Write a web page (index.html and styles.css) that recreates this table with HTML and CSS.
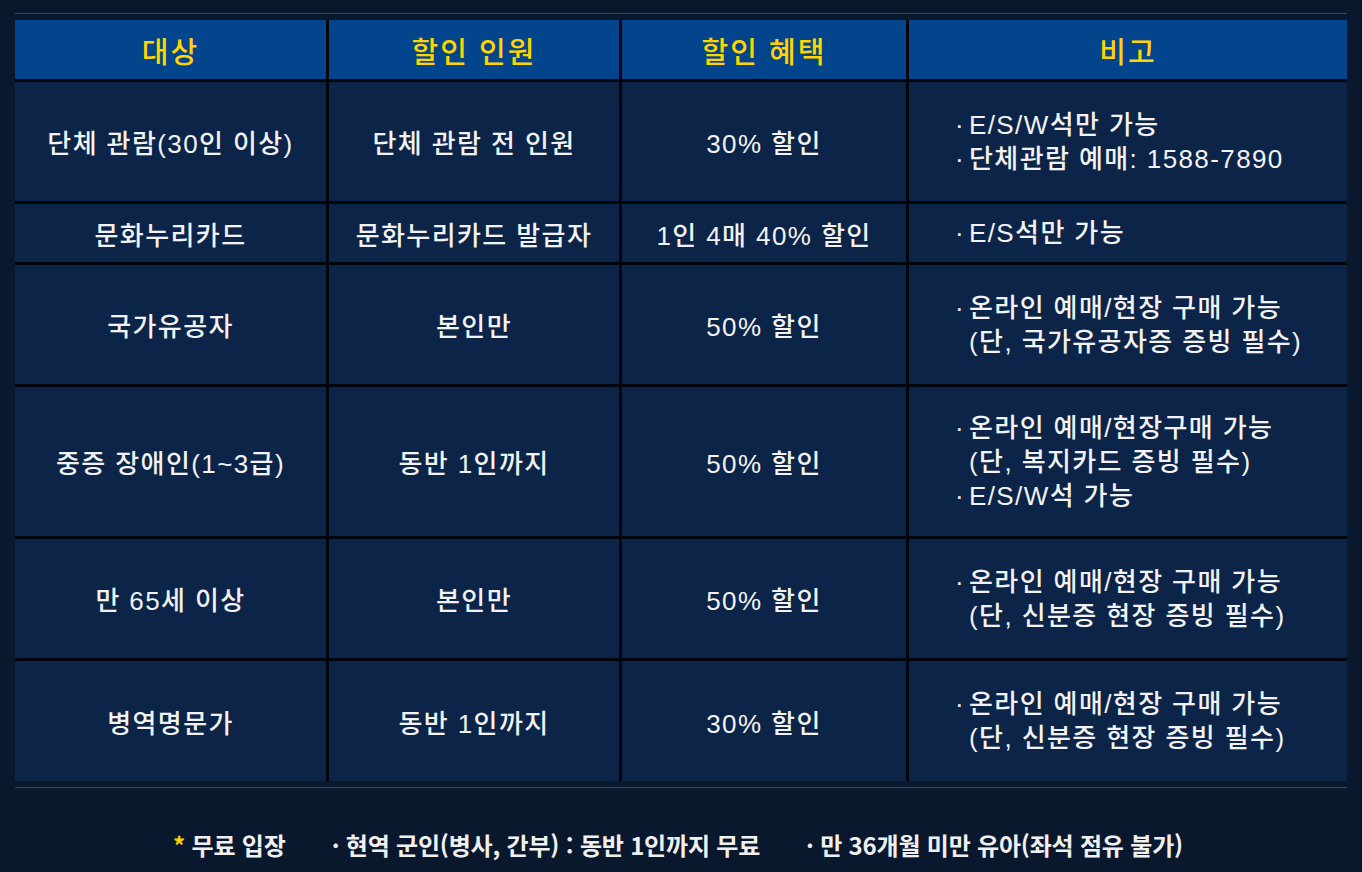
FILE: index.html
```html
<!DOCTYPE html>
<html lang="ko">
<head>
<meta charset="utf-8">
<title>할인 안내</title>
<link rel="stylesheet" href="styles.css">
</head>
<body>
<div class="wrap">
  <div class="rule"></div>
  <div class="table">
    <div class="th">대상</div>
    <div class="th">할인 인원</div>
    <div class="th">할인 혜택</div>
    <div class="th">비고</div>

    <div class="td h119">단체 관람(30인 이상)</div>
    <div class="td">단체 관람 전 인원</div>
    <div class="td">30% 할인</div>
    <div class="td note">
      <div class="li"><span class="b">·</span><span>E/S/W석만 가능</span></div>
      <div class="li"><span class="b">·</span><span>단체관람 예매: 1588-7890</span></div>
    </div>

    <div class="td h58">문화누리카드</div>
    <div class="td">문화누리카드 발급자</div>
    <div class="td">1인 4매 40% 할인</div>
    <div class="td note">
      <div class="li"><span class="b">·</span><span>E/S석만 가능</span></div>
    </div>

    <div class="td h119">국가유공자</div>
    <div class="td">본인만</div>
    <div class="td">50% 할인</div>
    <div class="td note">
      <div class="li"><span class="b">·</span><span>온라인 예매/현장 구매 가능<br>(단, 국가유공자증 증빙 필수)</span></div>
    </div>

    <div class="td h149">중증 장애인(1~3급)</div>
    <div class="td">동반 1인까지</div>
    <div class="td">50% 할인</div>
    <div class="td note">
      <div class="li"><span class="b">·</span><span>온라인 예매/현장구매 가능<br>(단, 복지카드 증빙 필수)</span></div>
      <div class="li"><span class="b">·</span><span>E/S/W석 가능</span></div>
    </div>

    <div class="td h119">만 65세 이상</div>
    <div class="td">본인만</div>
    <div class="td">50% 할인</div>
    <div class="td note">
      <div class="li"><span class="b">·</span><span>온라인 예매/현장 구매 가능<br>(단, 신분증 현장 증빙 필수)</span></div>
    </div>

    <div class="td h120">병역명문가</div>
    <div class="td">동반 1인까지</div>
    <div class="td">30% 할인</div>
    <div class="td note">
      <div class="li"><span class="b">·</span><span>온라인 예매/현장 구매 가능<br>(단, 신분증 현장 증빙 필수)</span></div>
    </div>
  </div>
  <div class="rule bottom"></div>
  <div class="footer">
    <span class="fi"><span class="star">*</span> 무료 입장</span>
    <span class="fi">· 현역 군인(병사, 간부) : 동반 1인까지 무료</span>
    <span class="fi">· 만 36개월 미만 유아(좌석 점유 불가)</span>
  </div>
</div>
</body>
</html>
```

FILE: styles.css
```css
html, body {
  margin: 0;
  padding: 0;
}
body {
  background: #0a182d;
  font-family: "Liberation Sans", "Noto Sans CJK KR", sans-serif;
  color: #f2f2f2;
  width: 1362px;
  height: 872px;
  overflow: hidden;
}
.wrap {
  padding: 13px 15px 0 15px;
  width: 1332px;
}
.rule {
  height: 1px;
  background: #1b4e8e;
}
.table {
  margin-top: 6px;
  display: grid;
  grid-template-columns: 311px 290px 284px 438px;
  gap: 3px;
  background: #02060c;
}
.th {
  height: 59px;
  background: #03458d;
  color: #ffd400;
  font-size: 29px;
  font-weight: 500;
  letter-spacing: 2px;
  display: flex;
  align-items: center;
  justify-content: center;
}
.td {
  background: #0c2447;
  font-size: 26px;
  font-weight: 500;
  letter-spacing: 1.4px;
  display: flex;
  align-items: center;
  justify-content: center;
}
.h119 { height: 119px; }
.h58 { height: 58px; }
.h149 { height: 149px; }
.h120 { height: 120px; }
.note {
  flex-direction: column;
  align-items: flex-start;
  justify-content: center;
  padding-left: 46px;
  line-height: 34px;
}
.li {
  display: flex;
}
.li .b {
  width: 14px;
  flex: none;
}
.rule.bottom {
  margin-top: 6px;
}
.footer {
  margin-top: 39px;
  display: flex;
  justify-content: center;
  gap: 46px;
  font-family: "Noto Sans CJK KR", sans-serif;
  font-size: 24px;
  font-weight: 700;
  letter-spacing: -0.2px;
  color: #f0f0f0;
  padding-right: 6px;
}
.star {
  color: #ffd400;
}
```
